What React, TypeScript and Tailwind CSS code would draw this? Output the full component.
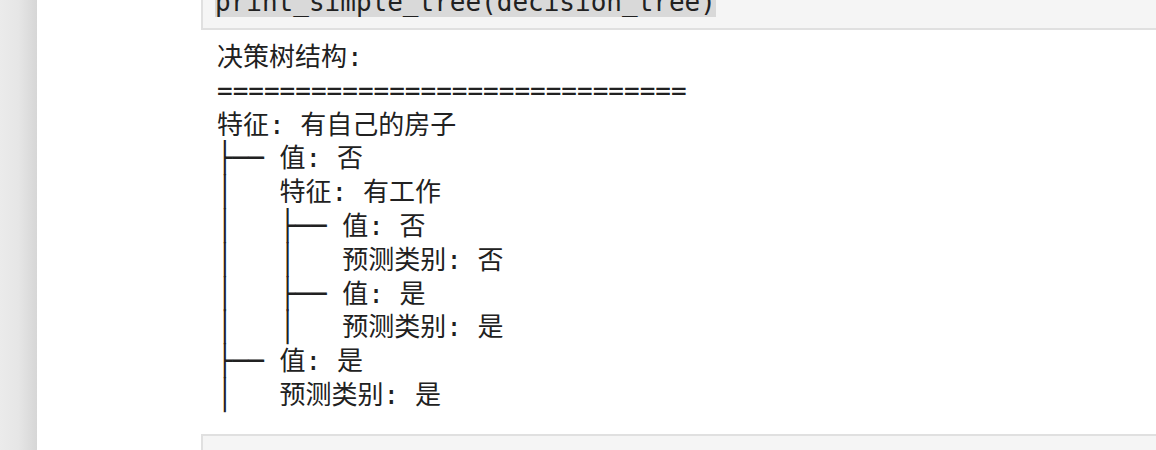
import React from "react";

const mono = "font-['DejaVu_Sans_Mono','Noto_Sans_CJK_SC',monospace]";

const treeLines = [
  "决策树结构:",
  "==============================",
  "特征: 有自己的房子",
  "├── 值: 否",
  "│   特征: 有工作",
  "│   ├── 值: 否",
  "│   │   预测类别: 否",
  "│   ├── 值: 是",
  "│   │   预测类别: 是",
  "├── 值: 是",
  "│   预测类别: 是",
];

// stretch box-drawing runs so the vertical strokes join across lines
function TreeLine({ text }: { text: string }) {
  const parts = text.split(/([│├└─]+)/);
  return (
    <div className="h-[33.8px]">
      {parts.map((p, i) =>
        /^[│├└─]+$/.test(p) ? (
          <span key={i} className="inline-block scale-y-[1.14]">
            {p}
          </span>
        ) : (
          <React.Fragment key={i}>{p}</React.Fragment>
        )
      )}
    </div>
  );
}

export default function App() {
  return (
    <div className="flex h-[450px] w-[1156px] overflow-hidden bg-white">
      {/* left gutter */}
      <div className="w-[37px] shrink-0 bg-gradient-to-r from-[#ebebeb] via-[#e6e6e6] to-[#d6d6d6]" />

      <div className="flex min-w-0 flex-1 flex-col pl-[164px] -mt-[23px]">
        {/* previous code cell */}
        <div className="border-b-2 border-l-2 border-[#e0e0e0] bg-[#f5f5f5] pb-[9px] pl-[12px] pt-[8px]">
          <div className={`${mono} text-[26px] leading-[34px] text-[#212121] whitespace-pre`}>
            <span className="bg-[#d9d9d9]">print_simple_tree(decision_tree)</span>
          </div>
        </div>

        {/* output */}
        <div className="pb-[21px] pl-[16px] pt-[11px]">
          <pre className={`${mono} text-[26px] leading-[33.8px] text-[#212121]`}>
            {treeLines.map((l, i) => (
              <TreeLine key={i} text={l} />
            ))}
          </pre>
        </div>

        {/* next code cell */}
        <div className="flex-1 border-l-2 border-t-2 border-[#e0e0e0] bg-[#f5f5f5] pl-[12px] pt-[9px]">
          <div className={`${mono} text-[26px] leading-[34px] text-[#212121] whitespace-pre`}>
            <span className="text-[#3d7a7a]">print</span>(predict(decision_tree, test_sample))
          </div>
        </div>
      </div>
    </div>
  );
}
